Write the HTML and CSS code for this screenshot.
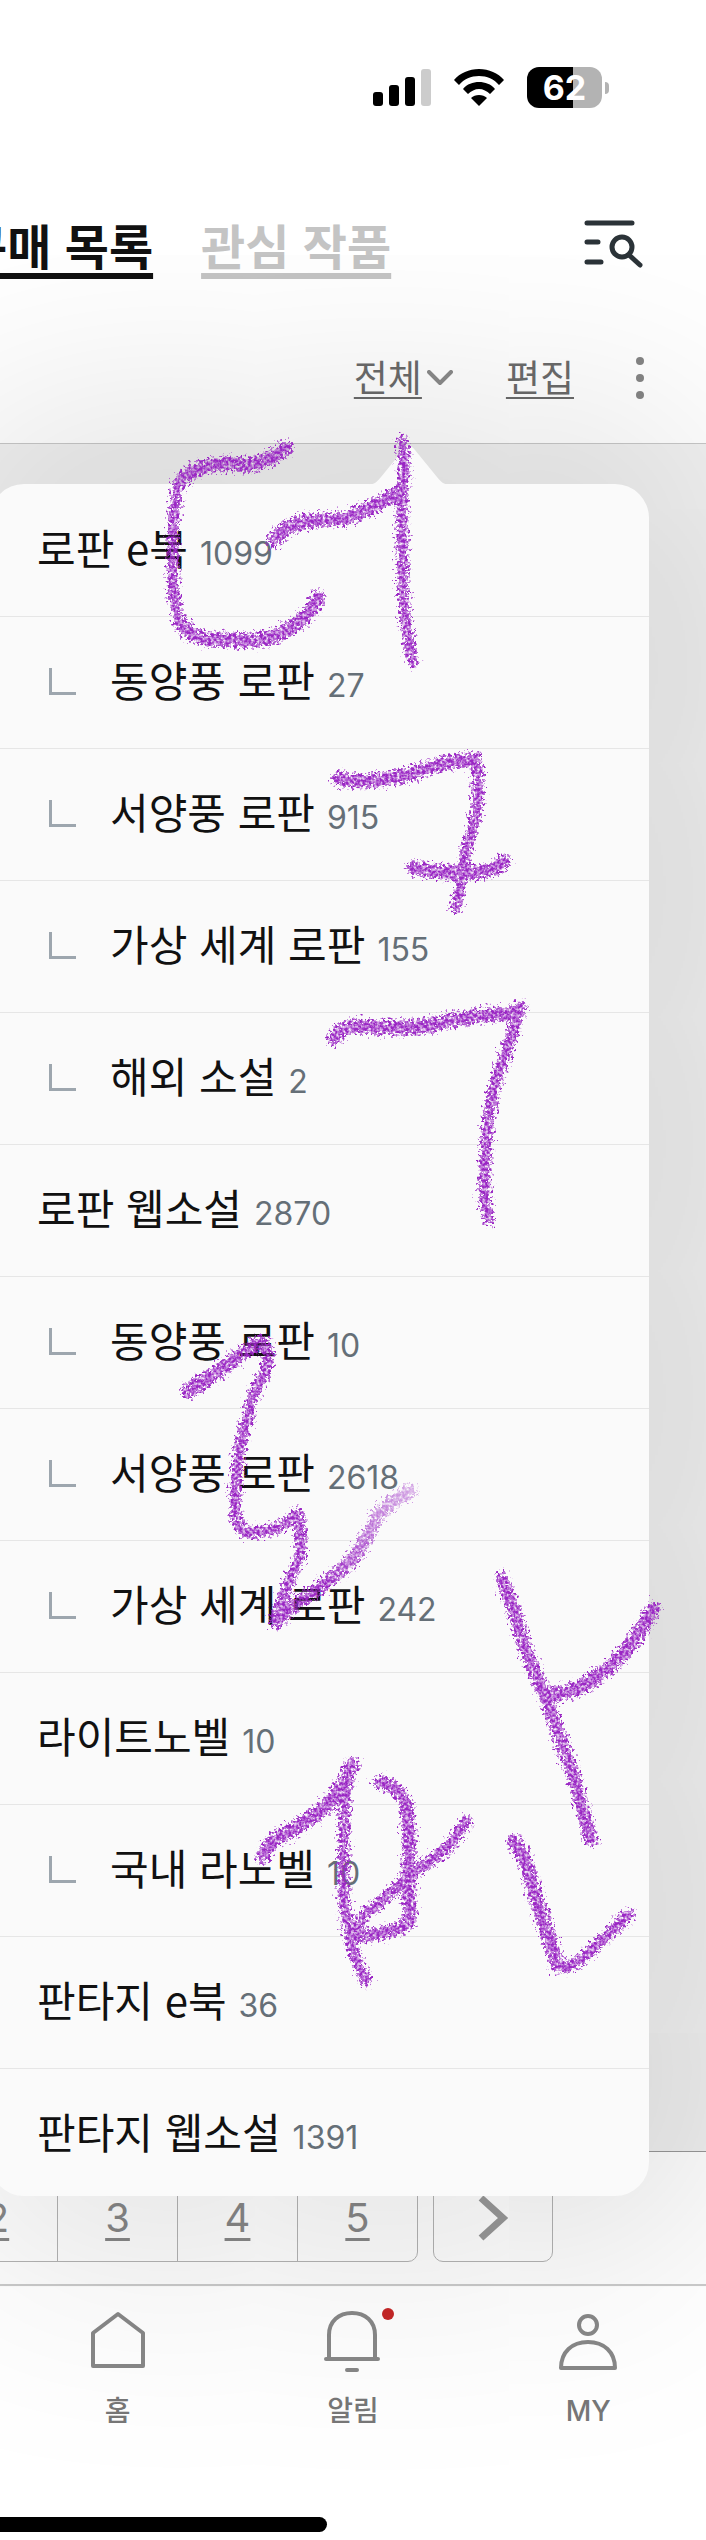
FILE: index.html
```html
<!DOCTYPE html>
<html lang="ko">

<head>
    <meta charset="UTF-8">
    <meta name="viewport" content="width=device-width, initial-scale=1">
    <title>구매 목록</title>
    <link rel="stylesheet" href="styles.css">
</head>

<body>
    <header class="header">
        <div class="status">
            <svg width="58" height="38" viewBox="0 0 58 38">
                <rect x="0" y="23" width="10" height="14" rx="3" />
                <rect x="16" y="16" width="10" height="21" rx="3" />
                <rect x="32" y="8" width="10" height="29" rx="3" />
                <rect x="48" y="0" width="10" height="37" rx="3" fill="#ccc" />
            </svg>
            <svg width="52" height="38" viewBox="0 0 52 38">
                <path d="M26 0C36 0 45 4 51 11L46 16C41 10 34 7 26 7S11 10 6 16L1 11C7 4 16 0 26 0Z" />
                <path d="M26 13C32 13 38 15 42 20L37 25C34 22 30 20 26 20S18 22 15 25L10 20C14 15 20 13 26 13Z" />
                <path d="M26 26C29 26 32 27 34 29L26 37L18 29C20 27 23 26 26 26Z" />
            </svg>
            <div class="battery"><span>62</span></div>
        </div>

        <div class="tabs">
            <a href="#" class="tab active">구매 목록</a>
            <a href="#" class="tab">관심 작품</a>
            <button class="icon-button search" aria-label="검색">
                <svg width="60" height="50" viewBox="0 0 60 50" fill="none" stroke="#2b3338" stroke-width="5" stroke-linecap="round">
                    <path d="M3 4H48M3 23H14M3 43H17" />
                    <circle cx="38" cy="28" r="10" />
                    <path d="M45 36L56 46" />
                </svg>
            </button>
        </div>

        <div class="toolbar">
            <a href="#" class="filter">전체</a>
            <svg class="chevron" width="26" height="16" viewBox="0 0 26 16" fill="none" stroke="#8a8a8a" stroke-width="4" stroke-linecap="round" stroke-linejoin="round">
                <path d="M2 2L13 13L24 2" />
            </svg>
            <a href="#" class="edit">편집</a>
            <button class="icon-button" aria-label="더보기">
                <svg width="8" height="42" viewBox="0 0 8 42" fill="#858585">
                    <circle cx="4" cy="4" r="4" />
                    <circle cx="4" cy="21" r="4" />
                    <circle cx="4" cy="38" r="4" />
                </svg>
            </button>
        </div>
    </header>

    <main class="shelf">
        <div class="popover">
            <svg class="arrow" width="86" height="40" viewBox="0 0 86 40" fill="#fafafa">
                <path d="M0 40C8 40 11 37 15 32L37 5Q43 -3 49 5L71 32C75 37 78 40 86 40Z" />
            </svg>
            <ul class="categories">
                <li><a href="#">로판 e북<span class="count">1099</span></a></li>
                <li class="sub"><a href="#">동양풍 로판<span class="count">27</span></a></li>
                <li class="sub"><a href="#">서양풍 로판<span class="count">915</span></a></li>
                <li class="sub"><a href="#">가상 세계 로판<span class="count">155</span></a></li>
                <li class="sub"><a href="#">해외 소설<span class="count">2</span></a></li>
                <li><a href="#">로판 웹소설<span class="count">2870</span></a></li>
                <li class="sub"><a href="#">동양풍 로판<span class="count">10</span></a></li>
                <li class="sub"><a href="#">서양풍 로판<span class="count">2618</span></a></li>
                <li class="sub"><a href="#">가상 세계 로판<span class="count">242</span></a></li>
                <li><a href="#">라이트노벨<span class="count">10</span></a></li>
                <li class="sub"><a href="#">국내 라노벨<span class="count">10</span></a></li>
                <li><a href="#">판타지 e북<span class="count">36</span></a></li>
                <li><a href="#">판타지 웹소설<span class="count">1391</span></a></li>
            </ul>
        </div>
    </main>

    <div class="pagination">
        <div class="pages">
            <a href="#">2</a>
            <a href="#">3</a>
            <a href="#">4</a>
            <a href="#">5</a>
        </div>
        <button class="next" aria-label="다음">
            <svg width="32" height="46" viewBox="0 0 32 46" fill="none" stroke="#999" stroke-width="7">
                <path d="M4 3L26 23L4 43" />
            </svg>
        </button>
    </div>

    <nav class="bottom-nav">
        <a href="#">
            <svg width="60" height="64" viewBox="0 0 60 64">
                <path d="M30 6L55 25V58H5V25Z" />
            </svg>
            홈
        </a>
        <a href="#">
            <svg width="60" height="64" viewBox="0 0 60 64">
                <path d="M6 51V27C6 13 16 5 29 5S52 13 52 27V51M3 51H55M24 62H34" />
            </svg>
            <span class="badge"></span>
            알림
        </a>
        <a href="#">
            <svg width="60" height="64" viewBox="0 0 60 64">
                <circle cx="30" cy="17" r="9" />
                <path d="M3 60C3 44 14 34 30 34S57 44 57 60Z" />
            </svg>
            MY
        </a>
    </nav>
    <div class="home-indicator"></div>

    <!-- pencil scribble over the list -->
    <svg class="scribble" viewBox="0 0 706 2540" fill="none" aria-hidden="true">
        <defs>
            <linearGradient id="fadeUp" gradientUnits="userSpaceOnUse" x1="330" y1="1590" x2="412" y2="1490">
                <stop offset="0" stop-color="#9a28c4" />
                <stop offset="1" stop-color="#9a28c4" stop-opacity=".4" />
            </linearGradient>
            <filter id="pencil" filterUnits="userSpaceOnUse" x="0" y="400" width="706" height="1640">
                <feTurbulence type="fractalNoise" baseFrequency=".35" numOctaves="3" seed="4" result="noise" />
                <feDisplacementMap in="SourceGraphic" in2="noise" scale="18" xChannelSelector="R" yChannelSelector="G" result="rough" />
                <feColorMatrix in="noise" type="matrix" values="0 0 0 0 0  0 0 0 0 0  0 0 0 0 0  0 0 2 0 -.28" result="grain" />
                <feComposite in="rough" in2="grain" operator="in" />
                <feGaussianBlur stdDeviation=".5" />
            </filter>
        </defs>
        <g filter="url(#pencil)" stroke="#9a28c4" stroke-linecap="round" stroke-linejoin="round">
            <g stroke-width="14">
                <path d="M286 448Q268 462 248 465Q230 462 212 465Q190 470 180 482" />
                <path d="M180 622Q190 638 212 640Q235 639 252 641Q275 639 290 628Q314 612 318 597" />
                <path d="M274 540Q286 527 302 522Q320 519 344 519Q366 512 401 491" />
                <path d="M339 778Q350 782 367 781Q400 778 420 771Q450 760 472 760" />
                <path d="M414 868Q440 874 466 872Q496 874 503 861" />
                <path d="M334 1038Q346 1024 358 1026Q395 1030 430 1025Q470 1015 518 1013" />
                <path d="M188 1391L216 1373L243 1353L260 1343" />
                <path d="M263 1857Q268 1842 279 1837Q305 1824 322 1810Q344 1788 352 1765" />
                <path d="M502 1579Q507 1594 513 1606Q520 1640 547 1700Q562 1745 572 1770Q580 1800 591 1840" stroke-width="13" />
                <path d="M551 1694Q572 1693 586 1684Q610 1668 622 1655Q640 1634 653 1609" />
                <path d="M380 1782Q400 1787 406 1805Q410 1830 409 1860V1922Q400 1932 362 1936" stroke-width="13" />
                <path d="M514 1841Q528 1861 533 1888L548 1935L558 1965" />
            </g>
            <g stroke-width="11">
                <path d="M180 480Q175 495 174 515Q172 545 173 565Q172 600 180 622" />
                <path d="M402 441Q405 455 404 475Q401 500 402 535Q402 580 405 615Q408 640 413 662" />
                <path d="M475 758Q480 780 477 805Q473 830 467 845Q462 880 456 908" />
                <path d="M520 1007Q508 1050 500 1069Q487 1110 486 1145Q484 1175 485 1200Q486 1212 490 1220" />
                <path d="M262 1341Q274 1358 264 1374Q250 1398 248 1418Q238 1445 236 1485Q233 1530 246 1532Q278 1534 297 1514Q303 1530 300 1556Q287 1585 275 1620" />
                <path d="M277 1622Q292 1605 318 1589Q342 1570 354 1558Q374 1526 378 1514Q390 1502 410 1491" stroke="url(#fadeUp)" stroke-width="13" />
                <path d="M350 1767Q344 1790 344 1817Q343 1860 344 1893Q347 1945 366 1981" />
                <path d="M362 1937Q350 1925 374 1907Q390 1893 408 1878Q438 1855 448 1848Q460 1830 467 1821" />
                <path d="M560 1968Q569 1968 580 1960L605 1938L629 1914" />
            </g>
            <path d="M404 455Q405 475 403 495" stroke-width="9" />
        </g>
    </svg>
</body>

</html>
```
FILE: styles.css
```css
* {
    box-sizing: border-box;
}

body {
    position: relative;
    margin: 0;
    background-color: #fff;
    color: #111;
    font-family: "Noto Sans CJK KR", sans-serif;
    overflow-x: hidden;
}

a {
    color: inherit;
}

svg {
    display: block;
}

button {
    padding: 0;
    background: none;
    border: none;
}

/* header */
.header {
    border-bottom: 1px solid #c8c8c8;
}

.status {
    display: flex;
    justify-content: flex-end;
    align-items: center;
    gap: 22px;
    padding: 67px 104px 0 0;
}

.battery {
    position: relative;
    width: 75px;
    height: 41px;
    border-radius: 12px;
    background: linear-gradient(90deg, #000 62%, #b3b3b3 62%);
    color: #fff;
    font: bold 34px/41px Inter, sans-serif;
    text-align: center;
}

.battery::after {
    content: "";
    position: absolute;
    right: -7px;
    top: 15px;
    width: 4px;
    height: 12px;
    border-radius: 0 4px 4px 0;
    background-color: #b3b3b3;
}

.tabs {
    display: flex;
    align-items: center;
    gap: 48px;
    margin: 100px 62px 0 -37px;
    height: 72px;
}

.tab {
    flex-shrink: 0;
    color: #c4c4c4;
    font-size: 48px;
    font-weight: bold;
    line-height: 70px;
    text-decoration-thickness: 6px;
    text-underline-offset: 8px;
}

.tab.active {
    color: #111;
}

.search {
    margin-left: auto;
}

.toolbar {
    display: flex;
    justify-content: flex-end;
    align-items: center;
    height: 56px;
    margin: 70px 62px 37px 0;
    color: #6b6b6b;
    font-size: 37px;
    line-height: 52px;
}

.toolbar a {
    padding-bottom: 4px;
    text-decoration-thickness: 2px;
    text-underline-offset: 5px;
}

.chevron {
    margin: 0 53px 0 5px;
}

.edit {
    margin-right: 62px;
}

/* category popover */
.shelf {
    padding-top: 40px;
    background-color: #f1f1f1;
    border-bottom: 1px solid #999;
}

.popover {
    position: relative;
    z-index: 1;
    margin: 0 57px -45px -10px;
    border-radius: 34px;
    background-color: #fafafa;
    box-shadow: 0 0 240px 50px rgba(0, 0, 0, .15);
}

.arrow {
    position: absolute;
    right: 197px;
    top: -39px;
}

.categories {
    margin: 0;
    padding: 0;
    list-style: none;
}

.categories li {
    display: flex;
    height: 132px;
    padding: 31px 20px 0 47px;
    border-top: 1px solid #e6e6e6;
    font-size: 42px;
    line-height: 62px;
}

.categories li:first-child {
    border-top-color: transparent;
}

.categories li:last-child {
    height: 128px;
}

.categories a {
    text-decoration: none;
}

.categories .sub {
    padding-left: 59px;
}

.sub::before {
    content: "";
    width: 24px;
    height: 24px;
    margin: 20px 34px 0 0;
    border: solid #9da6ae;
    border-width: 0 0 3px 3px;
}

.count {
    margin-left: 12px;
    color: #656f77;
    font-family: Inter, sans-serif;
    font-size: 32px;
}

/* pagination */
.pagination {
    display: flex;
    gap: 15px;
    margin-left: -64px;
    padding: 22px 0;
    color: #888;
}

.pages {
    display: flex;
    border: 1px solid #b5b5b5;
    border-radius: 10px;
}

.pages a {
    width: 120px;
    height: 86px;
    border-left: 1px solid #b5b5b5;
    font: 40px/86px Inter, sans-serif;
    text-align: center;
    text-decoration-thickness: 3px;
    text-underline-offset: 6px;
}

.pages a:first-child {
    border-left: none;
}

.next {
    display: flex;
    justify-content: center;
    align-items: center;
    width: 120px;
    border: 1px solid #b5b5b5;
    border-radius: 10px;
}

/* bottom nav */
.bottom-nav {
    display: grid;
    grid-template-columns: repeat(3, 1fr);
    border-top: 2px solid #ccc;
    padding-top: 22px;
}

.bottom-nav a {
    position: relative;
    display: flex;
    flex-direction: column;
    align-items: center;
    gap: 18px;
    color: #777;
    font-family: Inter, "Noto Sans CJK KR", sans-serif;
    font-size: 28px;
    font-weight: 500;
    line-height: 42px;
    text-decoration: none;
}

.bottom-nav svg {
    fill: none;
    stroke: #888;
    stroke-width: 4;
    stroke-linecap: round;
    stroke-linejoin: round;
}

.badge {
    position: absolute;
    top: 0;
    left: calc(50% + 29px);
    width: 12px;
    height: 12px;
    border-radius: 50%;
    background-color: #c62828;
}

.home-indicator {
    width: 327px;
    height: 15px;
    margin: 85px 0 8px;
    border-radius: 0 8px 8px 0;
    background-color: #000;
}

.scribble {
    position: absolute;
    top: 0;
    left: 0;
    z-index: 2;
    width: 100%;
    pointer-events: none;
}
```
